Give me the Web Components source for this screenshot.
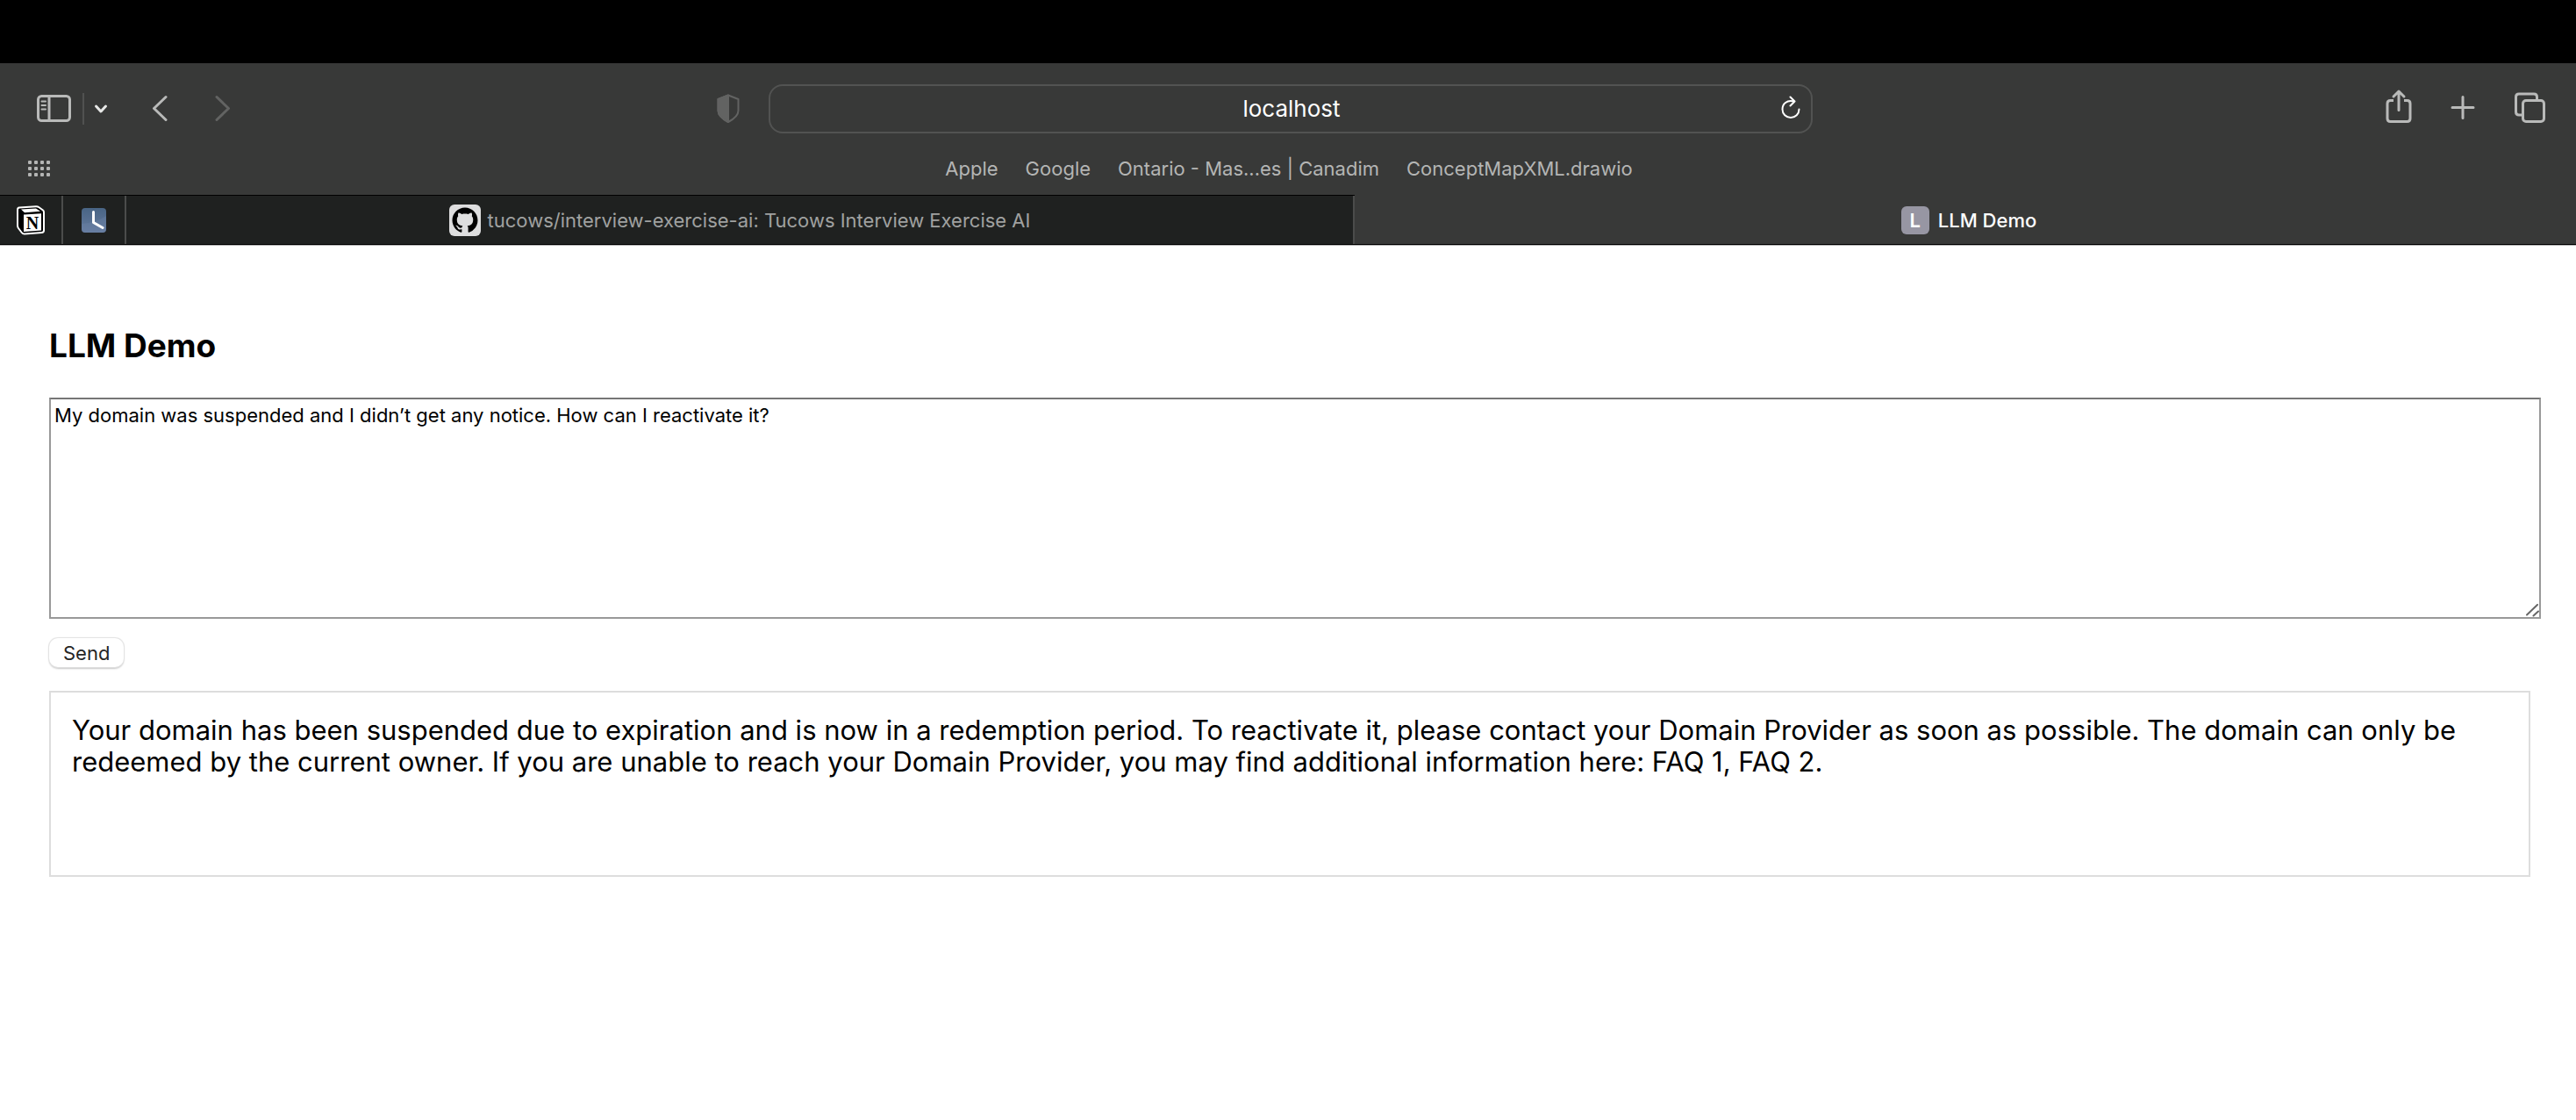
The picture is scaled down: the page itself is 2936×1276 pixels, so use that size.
<!DOCTYPE html>
<html lang="en">
<head>
<meta charset="utf-8">
<title>LLM Demo</title>
<style>
  body { margin: 0; background: #fff; color: #000; font-family: Inter, "Liberation Sans", sans-serif; font-size: 22px; line-height: 26px; }
</style>
</head>
<body>
<browser-chrome>
  <tool-bar></tool-bar>
  <bookmark-bar>
    <a href="#apple">Apple</a>
    <a href="#google">Google</a>
    <a href="#ontario">Ontario - Mas...es | Canadim</a>
    <a href="#concept">ConceptMapXML.drawio</a>
  </bookmark-bar>
  <tab-strip>
    <browser-tab pinned label="Notion">
      <svg slot="icon" width="32" height="34" viewBox="0 0 32 34" aria-hidden="true"><path d="M3 2.500L22 1.300Q24 1.200 25.500 2.300L30 5.500Q31 6.300 31 8V28.500Q31 30.800 28.500 31L9 32.500Q7 32.600 5.800 31L2 26Q1 24.600 1 23V5Q1 2.700 3 2.500Z" fill="#000" stroke="#fff" stroke-width="2"/><path d="M5 4.500L22 3.400L27 6.800L9 8.200Z" fill="#fff"/><path d="M8 10.500L28 9.200V28.500L8 30Z" fill="#fff"/><text x="18" y="26.500" text-anchor="middle" font-family="Liberation Serif, serif" font-weight="700" font-size="20" fill="#000">N</text></svg>
    </browser-tab>
    <browser-tab pinned label="Clock">
      <svg slot="icon" width="28" height="28" viewBox="0 0 28 28" aria-hidden="true"><defs><linearGradient id="sky" x2="0" y2="1"><stop stop-color="#496585"/><stop offset="1" stop-color="#657b9f"/></linearGradient></defs><rect width="28" height="28" rx="4" fill="url(#sky)"/><path d="M0 18Q16 17 28 9V24a4 4 0 0 1-4 4H4a4 4 0 0 1-4-4Z" fill="#7188ac" opacity=".3"/><path d="M13.500 4.500V16.500L24 22.500" fill="none" stroke="#fff" stroke-width="3" stroke-linecap="round" stroke-linejoin="round"/></svg>
    </browser-tab>
    <browser-tab>
      <svg slot="icon" width="36" height="36" viewBox="0 0 36 36" aria-hidden="true"><rect width="36" height="36" rx="6" fill="#dededf"/><path transform="translate(3.500 3.500) scale(1.810)" fill="#000" d="M8 0C3.580 0 0 3.580 0 8c0 3.540 2.290 6.530 5.470 7.590.4.070.55-.17.55-.38 0-.19-.01-.82-.01-1.490-2.010.37-2.530-.49-2.690-.94-.09-.23-.48-.94-.82-1.130-.28-.15-.68-.52-.01-.53.63-.01 1.080.58 1.230.82.72 1.210 1.870.87 2.330.66.070-.52.280-.87.510-1.070-1.780-.2-3.640-.89-3.640-3.950 0-.87.310-1.590.82-2.150-.08-.2-.36-1.020.080-2.120 0 0 .67-.21 2.200.82.640-.18 1.320-.27 2-.27s1.360.09 2 .27c1.530-1.040 2.200-.82 2.200-.82.440 1.100.160 1.920.080 2.120.51.560.82 1.270.82 2.150 0 3.070-1.870 3.750-3.650 3.950.29.250.54.730.54 1.480 0 1.070-.01 1.930-.01 2.200 0 .21.150.46.550.38A8.010 8.010 0 0 0 16 8c0-4.420-3.580-8-8-8Z"/></svg>
      tucows/interview-exercise-ai: Tucows Interview Exercise AI
    </browser-tab>
    <browser-tab active>
      <site-letter slot="icon">L</site-letter>
      LLM Demo
    </browser-tab>
  </tab-strip>
</browser-chrome>
<demo-page></demo-page>

<script>
function define(name, markup, setup) {
  const template = document.createElement('template');
  template.innerHTML = markup;
  customElements.define(name, class extends HTMLElement {
    constructor() {
      super();
      this.attachShadow({ mode: 'open' }).append(template.content.cloneNode(true));
      if (setup) setup.call(this, this.shadowRoot);
    }
  });
}

define('browser-chrome', `
<style>
  :host { display: block; background: #383938; border-top: 72px solid #000; }
</style>
<slot></slot>`);

define('tool-bar', `
<style>
  :host { display: grid; grid-template-columns: 1fr minmax(0, 1190px) 1fr; padding: 24px 35px 0 41px; height: 56px; color: #b9bab9; }
  div { display: flex; align-items: center; }
  button { display: flex; padding: 0; border: 0; background: none; color: inherit; }
  svg { display: block; fill: none; stroke: currentColor; stroke-width: 3; stroke-linecap: round; stroke-linejoin: round; }
  .rule { width: 2px; height: 36px; margin: 0 11px 0 13px; background: #505150; }
  .chevron { color: #e6e7e6; margin-right: 50px; }
  .forward { color: #626362; margin-left: 54px; }
  .shield { color: #626362; margin: 0 32px 0 auto; }
  .address { box-sizing: border-box; border: 2px solid #525352; border-radius: 16px; padding: 0 12px 0 36px; color: #fff; }
  input { flex: 1; min-width: 0; padding: 0; border: 0; outline: 0; background: none; color: #fff; font: 26px/32px Inter, "Liberation Sans", sans-serif; text-align: center; }
  .end { justify-content: flex-end; gap: 44px; }
</style>
<div>
  <button aria-label="Sidebar"><svg width="40" height="44" viewBox="0 0 40 44"><rect x="2.500" y="7.500" width="36" height="28" rx="4"/><path d="M15 8V35"/><path d="M6.500 13.500H11M6.500 18H11M6.500 22.500H11" stroke-width="2"/></svg></button>
  <span class="rule"></span>
  <button class="chevron" aria-label="Tab groups"><svg width="16" height="44" viewBox="0 0 16 44"><path d="M2.500 19L8 25L13.500 19"/></svg></button>
  <button aria-label="Back"><svg width="18" height="44" viewBox="0 0 18 44"><path d="M16 8.500L2.500 21.500L16 34.500"/></svg></button>
  <button class="forward" aria-label="Forward"><svg width="18" height="44" viewBox="0 0 18 44"><path d="M2 8.500L15.500 21.500L2 34.500"/></svg></button>
  <button class="shield" aria-label="Privacy report"><svg width="28" height="44" viewBox="0 0 28 44"><path d="M14 6.500L25.500 11V24Q25.500 31 14 37Q2.500 31 2.500 24V11Z" style="stroke-width:2"/><path d="M14 6.500V37Q2.500 31 2.500 24V11Z" fill="currentColor" style="stroke-width:2"/></svg></button>
</div>
<div class="address">
  <input aria-label="Address" value="localhost">
  <button aria-label="Reload"><svg width="22" height="44" viewBox="0 0 22 44" style="stroke-width:2"><path d="M14.500 13.500C6.500 11.500 1.500 16.500 1.500 22.500A9.500 9.500 0 0 0 20.500 22.500M10.500 8.500L15.500 13.500L10.500 18.500"/></svg></button>
</div>
<div class="end">
  <button aria-label="Share"><svg width="30" height="44" viewBox="0 0 30 44"><path d="M9 12.500H5.500Q2 12.500 2 16V33Q2 36.500 5.500 36.500H24.500Q28 36.500 28 33V16Q28 12.500 24.500 12.500H21" stroke-linecap="butt"/><path d="M15 23.500V2.500M9 8L15 2.200L21 8"/></svg></button>
  <button aria-label="New tab"><svg width="28" height="44" viewBox="0 0 28 44"><path d="M14 8.500V32.500M2 20.500H26"/></svg></button>
  <button aria-label="Tab overview"><svg width="36" height="44" viewBox="0 0 36 44"><rect x="10.500" y="12.500" width="24" height="24" rx="3.500"/><path d="M9.500 29H6Q2.500 29 2.500 25.500V8.500Q2.500 5 6 5H23Q26.500 5 26.500 8.500V12"/></svg></button>
</div>`);

define('bookmark-bar', `
<style>
  :host { display: grid; grid-template-columns: 1fr auto 1fr; align-items: center; height: 60px; padding: 10px 30px 0 32px; color: #b4b5b4; }
  button { display: flex; justify-self: start; padding: 0; border: 0; background: none; color: inherit; }
  svg { fill: currentColor; }
  nav { display: flex; gap: 31px; }
  ::slotted(a) { color: inherit; text-decoration: none; }
</style>
<button aria-label="Show favourites"><svg width="26" height="18" viewBox="0 0 26 18"><g id="row"><rect width="4" height="4" rx="1"/><rect x="7" width="4" height="4" rx="1"/><rect x="14" width="4" height="4" rx="1"/><rect x="21" width="4" height="4" rx="1"/></g><use href="#row" y="7"/><use href="#row" y="14"/></svg></button>
<nav><slot></slot></nav>`);

define('tab-strip', `
<style>
  :host { display: flex; overflow: hidden; border-bottom: 1px solid #b8b8b8; }
</style>
<slot></slot>`);

define('browser-tab', `
<style>
  :host { display: flex; flex: 1 1 0; box-sizing: border-box; height: 57px; border: solid #000; border-width: 1px 0; min-width: 0; }
  button { flex: 1; display: flex; align-items: center; justify-content: center; gap: 8px; padding: 0; border: 0; border-right: 2px solid #4b4c4b; background: #1f2120; color: #a0a1a0; font: inherit; white-space: nowrap; }
  :host([pinned]) { flex: 0 0 72px; }
  :host([active]) { border-top-color: #383938; margin-right: -8px; }
  :host([active]) button { background: #383938; color: #fff; font-weight: 500; gap: 10px; border-right: 0; }
  :host([pinned]) span { display: none; }
</style>
<button><slot name="icon"></slot><span><slot></slot></span></button>`, function (root) {
  if (this.hasAttribute('label')) root.querySelector('button').setAttribute('aria-label', this.getAttribute('label'));
});

define('site-letter', `
<style>
  :host { display: flex; align-items: center; justify-content: center; width: 32px; height: 32px; border-radius: 6px; background: #9796a3; color: #fff; font-weight: 600; }
</style>
<slot></slot>`);

define('demo-page', `
<style>
  :host { display: block; padding: 92px 52px 0 56px; }
  h1 { margin: 0 0 37px; font-size: 37px; line-height: 44px; font-weight: 700; }
  prompt-form { margin-right: -12px; }
</style>
<main>
  <h1>LLM Demo</h1>
  <prompt-form></prompt-form>
  <answer-box>Your domain has been suspended due to expiration and is now in a redemption period. To reactivate it, please contact your Domain Provider as soon as possible. The domain can only be redeemed by the current owner. If you are unable to reach your Domain Provider, you may find additional information here: FAQ 1, FAQ 2.</answer-box>
</main>`);

define('prompt-form', `
<style>
  :host { display: block; }
  form { display: flex; flex-direction: column; align-items: flex-start; gap: 22px; }
  textarea { display: block; box-sizing: border-box; width: 100%; height: 252px; margin: 0; padding: 5px 4px; border: 2px solid #999; border-top-color: #767676; border-radius: 0; outline: 0; background: #fff; color: #000; font: 22px/26px Inter, "Liberation Sans", sans-serif; resize: both; }
  textarea::-webkit-resizer { background: url("data:image/svg+xml,%3Csvg xmlns='http://www.w3.org/2000/svg' width='15' height='15'%3E%3Cpath d='M1 12.500L13 1M8.500 13.500L14 8.500' stroke='%23666' stroke-width='2' stroke-linecap='round'/%3E%3C/svg%3E") no-repeat; }
  button { height: 33px; padding: 0 16px; border: 0; border-radius: 10px; background: #fff; color: #262626; box-shadow: 0 0 1px 1px #e2e2e2, 0 2px 2px #c4c4c4; font: 22px/32px Inter, "Liberation Sans", sans-serif; }
</style>
<form>
  <textarea aria-label="Message">My domain was suspended and I didn’t get any notice. How can I reactivate it?</textarea>
  <button type="button">Send</button>
</form>`);

define('answer-box', `
<style>
  :host { display: block; box-sizing: border-box; min-height: 212px; margin-top: 27px; padding: 25px 24px; border: 2px solid #ddd; font-size: 31px; line-height: 36px; }
</style>
<slot></slot>`);
</script>
</body>
</html>
